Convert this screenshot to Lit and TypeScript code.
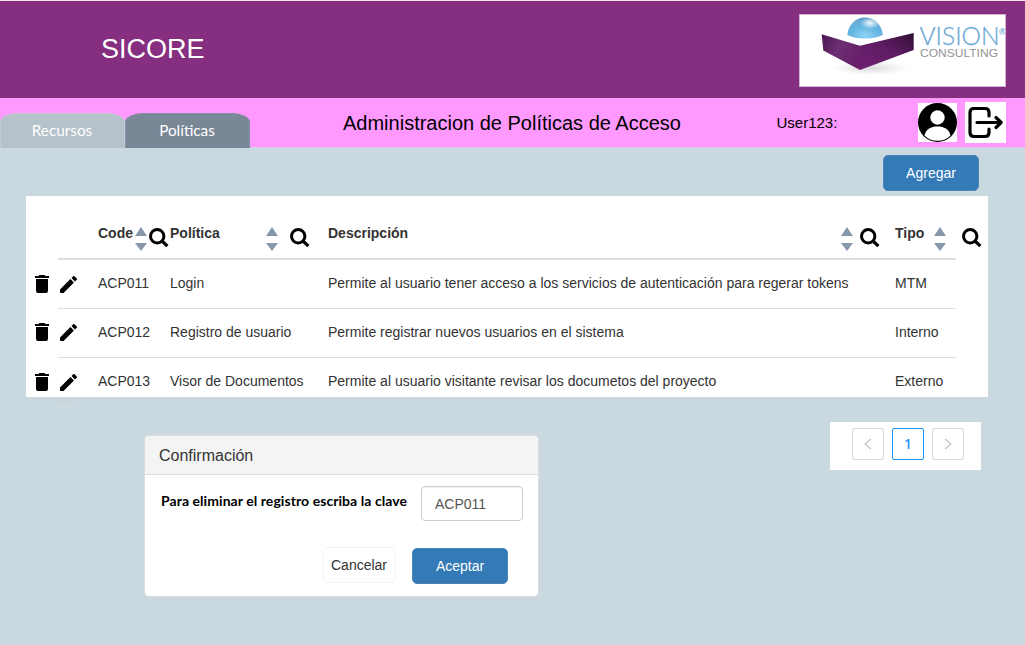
import { LitElement, html, css, svg } from "lit";
import { customElement, property } from "lit/decorators.js";

@customElement("vision-logo")
class VisionLogo extends LitElement {
  static styles = css`
    :host { display: block; width: 207px; height: 73px; background: #fff; border: 1px solid #d0b3d0; box-sizing: border-box; }
    svg { display: block; }
    .vision { font: 300 24.5px/1 "Lato", sans-serif; fill: #68a9d6; stroke: #68a9d6; stroke-width: .25px; }
    .mark { font: 700 9px/1 "Liberation Sans", sans-serif; fill: #68a9d6; }
    .consulting { font: 11.3px/1 "Liberation Sans", sans-serif; fill: #929497; }
  `;
  render() {
    return html`<svg width="205" height="71" viewBox="1 1 205 71">
      <defs>
        <radialGradient id="ball" cx="50%" cy="85%" r="85%">
          <stop offset="0" stop-color="#8fd3f3" /><stop offset=".5" stop-color="#62b4e2" />
          <stop offset=".85" stop-color="#6cabd6" /><stop offset="1" stop-color="#4f8fba" />
        </radialGradient>
        <radialGradient id="shine">
          <stop offset="0" stop-color="#fff" stop-opacity=".9" /><stop offset="1" stop-color="#fff" stop-opacity="0" />
        </radialGradient>
        <linearGradient id="left" x1="0" y1="0" x2="1" y2=".5">
          <stop offset="0" stop-color="#4a1850" /><stop offset=".5" stop-color="#6d2f74" /><stop offset="1" stop-color="#672069" />
        </linearGradient>
        <linearGradient id="right" x1="0" y1="1" x2="1" y2="0">
          <stop offset="0" stop-color="#6e2072" /><stop offset=".55" stop-color="#5e1c63" /><stop offset="1" stop-color="#2f1033" />
        </linearGradient>
        <radialGradient id="shade"><stop offset="0" stop-color="#999" stop-opacity=".35" /><stop offset="1" stop-color="#999" stop-opacity="0" /></radialGradient>
      </defs>
      <ellipse cx="72" cy="54" rx="38" ry="7" fill="url(#shade)" />
      <path d="M48.3 21A17.8 19 0 0 1 83.8 21Q76 24.5 66 24.5T48.3 21Z" fill="url(#ball)" />
      <ellipse cx="71" cy="9" rx="10" ry="6" fill="url(#shine)" />
      <path d="M22.7 20.3L61 31.8V56L24.3 36.500Z" fill="url(#left)" />
      <path d="M61 31.8L114.700 19V36L61 56Z" fill="url(#right)" />
      <text class="vision" x="120.5" y="31" textLength="80" lengthAdjust="spacingAndGlyphs">VISION</text>
      <text class="mark" x="200" y="20.5">®</text>
      <text class="consulting" x="121" y="43" textLength="78" lengthAdjust="spacingAndGlyphs">CONSULTING</text>
    </svg>`;
  }
}

const glyphs: Record<string, unknown> = {
  trash: svg`<svg width="14" height="18" viewBox="0 0 14 18"><path d="M1 16q0 2 2 2h8q2 0 2-2V4H1zM14 1h-3.5l-1-1h-5l-1 1H0v2h14z"/></svg>`,
  pencil: svg`<svg width="17" height="17" viewBox="3 3 18 18"><path d="M3 17.25V21h3.75L17.81 9.94l-3.75-3.75zM20.71 7.04a1 1 0 0 0 0-1.41l-2.34-2.34a1 1 0 0 0-1.41 0l-1.83 1.83 3.75 3.75z"/></svg>`,
  search: svg`<svg width="20" height="20" viewBox="0 0 20 20" fill="none" stroke="#000"><circle cx="8.2" cy="8.2" r="6.7" stroke-width="3"/><path d="M13 13L18.4 18.2" stroke-width="3.2"/></svg>`,
  sort: svg`<svg width="12" height="24" viewBox="0 0 12 24" fill="#8798ad"><path d="M6 0l6 9H0zM0 16h12l-6 8z"/></svg>`,
  user: svg`<svg width="39" height="39" viewBox="0 0 39 39"><path fill="#fff" d="M0 0h39v39H0z"/><circle cx="19.5" cy="19.5" r="19.5"/><circle cx="19.5" cy="14.5" r="7.2" fill="#fff"/><path d="M6.5 32.5C8 26 13 23.5 19.5 23.5S31 26 32.5 32.5Q27.500 37.800 19.500 37.800T6.500 32.500Z" fill="#fff"/></svg>`,
  exit: svg`<svg width="41" height="41" viewBox="0 0 41 41" fill="none" stroke="#000" stroke-width="3.2" stroke-linecap="round" stroke-linejoin="round"><path d="M24 14V10.500Q24 6.500 20 6.500H9Q5 6.500 5 10.500V30.500Q5 34.500 9 34.500H20Q24 34.500 24 30.500V27M12 20.500H36M31 15.500L36.200 20.500L31 25.500"/></svg>`,
  prev: svg`<svg width="8" height="12" viewBox="0 0 8 12" fill="none" stroke="#bfbfbf" stroke-width="1.100"><path d="M7 1L1 6l6 5"/></svg>`,
  next: svg`<svg width="8" height="12" viewBox="0 0 8 12" fill="none" stroke="#bfbfbf" stroke-width="1.100"><path d="M1 1l6 5-6 5"/></svg>`,
};

@customElement("ui-glyph")
class UiGlyph extends LitElement {
  @property() name = "";
  static styles = css`:host { display: block; flex: none; } svg { display: block; }`;
  render() { return glyphs[this.name]; }
}

const columns = [
  { key: "code", label: "Code" },
  { key: "policy", label: "Política" },
  { key: "desc", label: "Descripción" },
  { key: "type", label: "Tipo" },
];

const rows = [
  ["ACP011", "Login", "Permite al usuario tener acceso a los servicios de autenticación para regerar tokens", "MTM"],
  ["ACP012", "Registro de usuario", "Permite registrar nuevos usuarios en el sistema", "Interno"],
  ["ACP013", "Visor de Documentos", "Permite al usuario visitante revisar los documetos del proyecto", "Externo"],
];

@customElement("app-root")
class AppRoot extends LitElement {
  static styles = css`
    :host { display: block; height: 645px; overflow: hidden; background: #cad8df; color: #333; font: 14px/20px "Liberation Sans", Arial, sans-serif; }
    * { box-sizing: border-box; }
    .top { height: 98px; padding: 13px 19px 0 101px; border-top: 1px solid #efe6ef; background: #862e80; display: flex; justify-content: space-between; }
    .brand { margin: 19px 0 0; color: #fff; font-size: 27px; line-height: 32px; font-weight: 400; }
    .bar { height: 50px; background: #ff99ff; display: flex; align-items: flex-start; border-bottom: 1px solid #d9cfe4; }
    .tabs { display: flex; width: 250px; margin-top: 15px; flex: none; }
    .tab { width: 125px; height: 35px; border-radius: 18px 18px 0 0 / 9px 9px 0 0; background: #b5c2c9; border: 1px solid #c0cdd6; border-bottom: 0; padding-right: 1px; color: #fff; text-align: center; font: 15.3px/32px "Lato", sans-serif; }
    .tab.active { background: #7a8796; border-color: #8390a3; }
    .title { margin: 13px 0 0 93px; width: 433.500px; flex: none; color: #000; font-size: 20px; line-height: 24px; font-weight: 400; white-space: nowrap; }
    .user { width: 141.500px; flex: none; margin-top: 15px; color: #000; font-size: 15px; line-height: 20px; }
    .avatar { margin: 5px 8px 0 0; }
    .exit { margin-top: 4px; background: #fff; }
    .tools { height: 48px; padding: 7px 46px 0 0; display: flex; justify-content: flex-end; }
    .btn { width: 96px; height: 36px; border: 1px solid #4b85b8; border-radius: 5px; background: #337ab7; color: #fff; font: inherit; padding: 0; }
    .panel { width: 962px; height: 201px; margin-left: 26px; background: #fff; }
    .line { display: flex; height: 49px; }
    .lead { width: 32px; flex: none; padding: 15px 0 0 9px; }
    .cells { width: 898px; flex: none; display: grid; grid-template-columns: 40px 72px 158px 567px 61px; border-bottom: 1px solid #ddd; padding-top: 13px; white-space: nowrap; }
    .head { height: 64px; }
    .head .cells { padding-top: 27px; border-bottom: 2px solid #ddd; font-weight: 700; }
    .col { display: flex; align-items: flex-start; }
    .col .sort { margin-top: 4px; }
    .col .find { margin: 5px 0 0 12px; }
    .label { width: 96px; flex: none; }
    .code .label { width: 37px; } .code .find { margin-left: 2px; }
    .desc .label { width: 513px; } .desc .find { margin-left: 7px; }
    .type .label { width: 39px; } .type .find { margin-left: 16px; }
    .edit { margin: 3px 0 0 2px; }
    .raised .lead { padding-top: 14px; } .raised .edit { margin-top: 2px; }
    .line.last { height: 39px; }
    .last .cells { border-bottom: 0; }
    .stub { width: 16px; height: 1px; margin: 9px 0 0 58px; background: #ddd; }
    .lower { display: flex; align-items: flex-start; padding: 15px 44px 0 144px; justify-content: space-between; }
    .dialog { width: 395px; height: 162px; margin-top: 13px; background: #fff; border: 1px solid #ddd; border-radius: 5px; overflow: hidden; }
    .caption { height: 39px; margin: 0; padding: 0 14px; background: #f4f4f4; border-bottom: 1px solid #ddd; font-size: 16px; line-height: 39px; font-weight: 400; }
    .form { display: flex; justify-content: space-between; padding: 11px 15px 0 16px; }
    .ask { color: #000; font: 700 14px/20px "Lato", sans-serif; letter-spacing: .065px; padding-top: 5px; white-space: nowrap; }
    .field { width: 102px; height: 35px; border: 1px solid #ccc; border-radius: 4px; padding: 0 13px; color: #555; font: inherit; box-shadow: inset 0 1px 1px rgba(0,0,0,.075); background: #fff; }
    .actions { display: flex; justify-content: flex-end; gap: 16px; padding: 27px 30px 0 0; }
    .cancel { width: 73px; height: 36px; margin-top: -1px; border: 1px solid #f4f4f4; border-radius: 5px; background: #fff; color: #333; font: inherit; padding: 0 1px 0 0; }
    .pager { width: 151px; height: 48px; padding: 6px 17px 0 22px; background: #fff; display: flex; gap: 8px; }
    .page { width: 32px; height: 32px; border: 1px solid #d9d9d9; border-radius: 2px; display: grid; place-items: center; }
    .page.current { border-color: #1890ff; color: #1890ff; font: 500 14px/30px "Noto Sans", sans-serif; padding-bottom: 1px; }
  `;

  render() {
    return html`
      <header class="top"><h1 class="brand">SICORE</h1><vision-logo></vision-logo></header>
      <div class="bar">
        <nav class="tabs"><div class="tab">Recursos</div><div class="tab active">Políticas</div></nav>
        <h2 class="title">Administracion de Políticas de Acceso</h2>
        <div class="user">User123:</div>
        <ui-glyph class="avatar" name="user"></ui-glyph><ui-glyph class="exit" name="exit"></ui-glyph>
      </div>
      <div class="tools"><button class="btn">Agregar</button></div>
      <section class="panel">
        <div class="line head"><div class="lead"></div><div class="cells"><span></span>
          ${columns.map(c => html`<div class="col ${c.key}"><span class="label">${c.label}</span><ui-glyph class="sort" name="sort"></ui-glyph><ui-glyph class="find" name="search"></ui-glyph></div>`)}
        </div></div>
        ${rows.map((r, i) => html`<div class="line ${["", "raised", "last"][i]}">
          <div class="lead"><ui-glyph name="trash"></ui-glyph></div>
          <div class="cells"><ui-glyph class="edit" name="pencil"></ui-glyph>${r.map(t => html`<span>${t}</span>`)}</div>
        </div>`)}
      </section>
      <div class="stub"></div>
      <div class="lower">
        <section class="dialog">
          <h3 class="caption">Confirmación</h3>
          <div class="form"><label class="ask">Para eliminar el registro escriba la clave</label><input class="field" .value=${"ACP011"} /></div>
          <div class="actions"><button class="cancel">Cancelar</button><button class="btn">Aceptar</button></div>
        </section>
        <nav class="pager"><div class="page"><ui-glyph name="prev"></ui-glyph></div><div class="page current">1</div><div class="page"><ui-glyph name="next"></ui-glyph></div></nav>
      </div>`;
  }
}
